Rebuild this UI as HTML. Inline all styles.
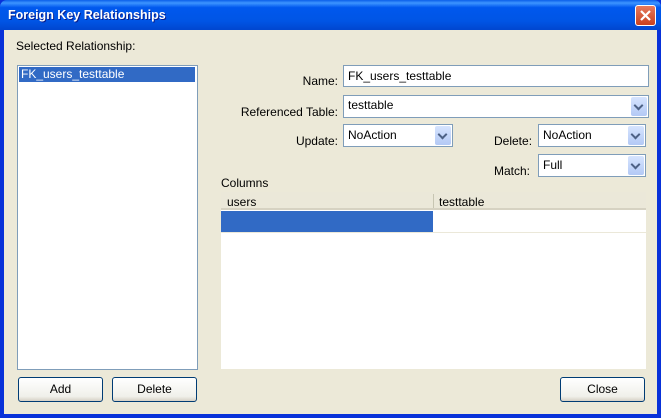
<!DOCTYPE html>
<html><head><style>
*{margin:0;padding:0;box-sizing:border-box}
body{width:661px;height:418px;overflow:hidden;background:#0831D9;font-family:Tahoma,"Liberation Sans",sans-serif;font-size:12px;color:#000;position:relative}
.a{position:absolute}
#title{left:0;top:0;width:661px;height:30px;background:linear-gradient(#0A5FEA 0%,#3D95FF 10%,#0058EE 25%,#0055E5 70%,#0046CF 100%);border-radius:7px 7px 0 0}
#title span{position:absolute;left:8px;top:8px;color:#fff;font-weight:bold;font-size:12.5px;text-shadow:1px 1px #0A1E8C}
#x{left:635px;top:5px;width:21px;height:21px;background:linear-gradient(#E67A5D,#C8401E);border:1px solid #fff;border-radius:3px}
#body{left:4px;top:30px;width:653px;height:384px;background:#ECE9D8}
.box{background:#fff;border:1px solid #7F9DB9}
.lbl{white-space:nowrap}
.r{text-align:right;width:120px}
.combo{background:#fff;border:1px solid #7F9DB9;padding:3px 4px;font-size:12px}
.arr{position:absolute;right:1px;top:1px;bottom:1px;width:16px;background:linear-gradient(#D6E4FE,#B3C9F5);border-radius:2px}
.arr:after{content:"";position:absolute;left:4px;top:5px;width:5px;height:5px;border-right:2px solid #4D6185;border-bottom:2px solid #4D6185;transform:rotate(45deg)}
.btn{border:1px solid #003C74;border-radius:3px;background:linear-gradient(#fff,#F0F0EA 80%,#D6D0C5);text-align:center;line-height:23px;font-size:12px}
</style></head><body>
<div class="a" id="title"><span>Foreign Key Relationships</span></div>
<div class="a" id="x"><svg width="19" height="19"><path d="M5 5L14 14M14 5L5 14" stroke="#fff" stroke-width="2.2"/></svg></div>
<div class="a" id="body"></div>
<div class="a lbl" style="left:16px;top:39px">Selected Relationship:</div>
<div class="a box" style="left:17px;top:65px;width:181px;height:305px"></div>
<div class="a" style="left:19px;top:67px;width:176px;height:15px;background:#316AC5;color:#fff;padding-left:2px;line-height:15px">FK_users_testtable</div>

<div class="a lbl r" style="left:218px;top:74px">Name:</div>
<div class="a box" style="left:343px;top:65px;width:306px;height:22px;padding:3px 4px;font-size:12px">FK_users_testtable</div>
<div class="a lbl r" style="left:218px;top:105px">Referenced Table:</div>
<div class="a combo" style="left:343px;top:95px;width:306px;height:23px;padding-top:2px">testtable<div class="arr"></div></div>
<div class="a lbl r" style="left:218px;top:134px">Update:</div>
<div class="a combo" style="left:343px;top:124px;width:110px;height:23px">NoAction<div class="arr"></div></div>
<div class="a lbl" style="left:494px;top:134px">Delete:</div>
<div class="a combo" style="left:538px;top:124px;width:108px;height:23px">NoAction<div class="arr"></div></div>
<div class="a lbl" style="left:494px;top:164px">Match:</div>
<div class="a combo" style="left:538px;top:154px;width:108px;height:23px">Full<div class="arr"></div></div>

<div class="a lbl" style="left:221px;top:176px">Columns</div>
<div class="a" style="left:221px;top:192px;width:425px;height:177px;background:#fff"></div>
<div class="a" style="left:221px;top:192px;width:425px;height:18px;background:#EBE8D9;border-bottom:2px solid #D6D2C2"></div>
<div class="a lbl" style="left:227px;top:195px">users</div>
<div class="a" style="left:433px;top:194px;width:1px;height:14px;background:#C7C5B2"></div>
<div class="a lbl" style="left:439px;top:195px">testtable</div>
<div class="a" style="left:221px;top:211px;width:212px;height:21px;background:#316AC5"></div>
<div class="a" style="left:221px;top:232px;width:425px;height:1px;background:#EBE8D9"></div>

<div class="a btn" style="left:18px;top:377px;width:85px;height:25px">Add</div>
<div class="a btn" style="left:112px;top:377px;width:85px;height:25px">Delete</div>
<div class="a btn" style="left:560px;top:377px;width:85px;height:25px">Close</div>
</body></html>
